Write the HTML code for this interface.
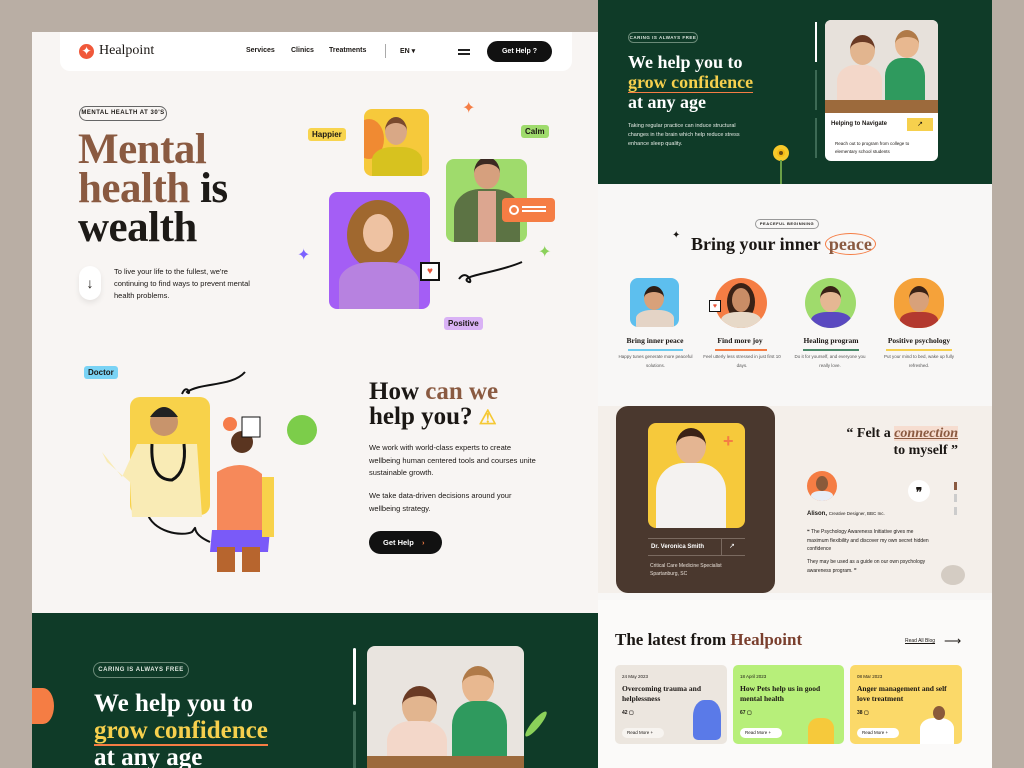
<!DOCTYPE html>
<html><head><meta charset="utf-8"><style>
*{margin:0;padding:0;box-sizing:border-box}
body{width:1024px;height:768px;overflow:hidden;background:#b9aea4;font-family:"Liberation Sans",sans-serif;position:relative;color:#1b1714}
.a{position:absolute}
.serif{font-family:"Liberation Serif",serif}
.b{font-weight:bold}
.pill{position:absolute;border:1px solid #555;border-radius:20px;font-size:6px;font-weight:bold;letter-spacing:.5px;text-align:center}
.tag{position:absolute;font-size:8px;font-weight:bold;padding:2px 4px;border-radius:3px}
.photo{position:absolute;border-radius:8px;overflow:hidden}
.head{position:absolute;border-radius:50%}
.body{position:absolute;border-radius:40% 40% 0 0}
</style></head><body>
<!-- LEFT PANEL -->
<div class="a" style="left:32px;top:32px;width:566px;height:736px;background:#f8f5f3;overflow:hidden">
 <div class="a" style="left:28px;top:0;width:512px;height:39px;background:#fff;border-radius:0 0 10px 10px"></div>
 <div class="a" style="left:47px;top:12px;width:15px;height:15px;border-radius:50%;background:#f0583a;color:#fff;font-size:12px;line-height:14px;text-align:center">✦</div>
 <div class="a serif" style="left:67px;top:11px;font-size:14px">Healpoint</div>
 <div class="a" style="left:214px;top:15px;font-size:7px;font-weight:bold">Services</div>
 <div class="a" style="left:259px;top:15px;font-size:7px;font-weight:bold">Clinics</div>
 <div class="a" style="left:297px;top:15px;font-size:7px;font-weight:bold">Treatments</div>
 <div class="a" style="left:353px;top:12px;width:1px;height:14px;background:#aaa"></div>
 <div class="a" style="left:368px;top:15px;font-size:7px;font-weight:bold">EN ▾</div>
 <div class="a" style="left:426px;top:17px;width:12px;height:1.5px;background:#222;box-shadow:0 4px 0 #222"></div>
 <div class="a" style="left:455px;top:9px;width:65px;height:21px;background:#111;border-radius:11px;color:#fff;font-size:7px;font-weight:bold;text-align:center;line-height:21px">Get Help ?</div>

 <div class="pill" style="left:47px;top:74px;width:88px;height:15px;line-height:13px;border-color:#666">MENTAL HEALTH AT 30'S</div>
 <div class="a serif b" style="left:46px;top:98px;font-size:43px;line-height:39px;color:#8a5a41;letter-spacing:-.5px">Mental<br>health <span style="color:#1d1a17">is</span><br><span style="color:#1d1a17">wealth</span></div>
 <div class="a" style="left:47px;top:234px;width:22px;height:34px;background:#fff;border-radius:11px;box-shadow:0 3px 6px rgba(0,0,0,.08);text-align:center;line-height:34px;font-size:14px">↓</div>
 <div class="a" style="left:82px;top:234px;font-size:7.5px;line-height:12px;width:140px">To live your life to the fullest, we're continuing to find ways to prevent mental health problems.</div>

 <!-- photos -->
 <div class="photo" style="left:332px;top:77px;width:65px;height:67px;background:#f6c93b">
  <div class="a" style="left:-10px;top:10px;width:30px;height:40px;background:#f08a32;border-radius:50%"></div>
  <div class="head" style="left:21px;top:8px;width:22px;height:28px;background:#d9a886;border-top:6px solid #7a4a2e"></div>
  <div class="body" style="left:8px;top:38px;width:50px;height:32px;background:#d7c21f"></div></div>
 <div class="tag" style="left:276px;top:96px;background:#f8d44e">Happier</div>
 <div class="photo" style="left:414px;top:127px;width:81px;height:83px;background:#9fdb6c">
  <div class="head" style="left:28px;top:-2px;width:26px;height:32px;background:#d6a07e;border-top:7px solid #3b2a22"></div>
  <div class="body" style="left:8px;top:30px;width:66px;height:55px;background:#5c7344"></div>
  <div class="a" style="left:32px;top:32px;width:18px;height:52px;background:#dca690"></div></div>
 <div class="tag" style="left:489px;top:93px;background:#9fdb6c">Calm</div>
 <div class="a" style="left:470px;top:166px;width:53px;height:24px;background:#f57d44;border-radius:4px"><div class="a" style="left:7px;top:7px;width:10px;height:10px;border:2px solid #fff;border-radius:50%"></div><div class="a" style="left:20px;top:8px;width:24px;height:2px;background:#fff;box-shadow:0 4px 0 #fff"></div></div>
 <div class="photo" style="left:297px;top:160px;width:101px;height:117px;background:#a45ef5">
  <div class="head" style="left:18px;top:8px;width:62px;height:70px;background:#a0682f"></div>
  <div class="head" style="left:34px;top:22px;width:30px;height:38px;background:#eec2a2"></div>
  <div class="body" style="left:10px;top:70px;width:80px;height:50px;background:#b782e0"></div></div>
 <div class="a" style="left:388px;top:230px;width:20px;height:19px;background:#fff;border:2px solid #111;color:#e8553a;font-size:10px;text-align:center;line-height:15px">♥</div>
 <div class="a" style="left:265px;top:213px;color:#7b61ff;font-size:16px">✦</div>
 <div class="a" style="left:430px;top:66px;color:#f57d44;font-size:16px">✦</div>
 <div class="a" style="left:506px;top:210px;color:#8bd15a;font-size:16px">✦</div>
 <svg class="a" style="left:425px;top:225px" width="70" height="30"><path d="M2 22 C10 10 18 30 10 24 C5 18 40 16 65 5" stroke="#111" stroke-width="2" fill="none"/></svg>
 <div class="tag" style="left:412px;top:285px;background:#d9b2f5">Positive</div>

 <!-- illustration -->
 <div class="tag" style="left:52px;top:334px;background:#7ad3f5">Doctor</div>
 <svg class="a" style="left:60px;top:330px" width="230" height="210">
  <path d="M90 32 C95 20 100 35 95 30 C110 20 140 25 153 10" stroke="#111" stroke-width="2" fill="none"/>
  <path d="M55 150 C60 170 90 175 100 170 C108 160 95 170 118 180" stroke="#111" stroke-width="2" fill="none"/>
  <rect x="38" y="35" width="80" height="118" rx="10" fill="#f8d24a"/>
  <path d="M10 90 L30 115 L45 82 L105 82 L110 155 L40 155 L38 120 L15 100Z" fill="#f9ebb5"/>
  <circle cx="72" cy="60" r="14" fill="#c8946c"/><path d="M58 55 Q72 35 86 55" fill="#222"/>
  <path d="M60 82 Q58 118 80 118 Q95 110 92 82" stroke="#111" stroke-width="3" fill="none"/>
  <circle cx="150" cy="80" r="11" fill="#5a3520"/>
  <path d="M125 110 Q150 95 170 112 L170 170 L125 170Z" fill="#f6895a"/>
  <path d="M120 168 L178 168 L176 190 L118 190Z" fill="#7a5af8"/>
  <rect x="125" y="185" width="18" height="45" fill="#b7652e"/><rect x="150" y="185" width="18" height="45" fill="#b7652e"/>
  <rect x="170" y="115" width="12" height="60" fill="#f8d24a"/>
  <circle cx="210" cy="68" r="15" fill="#7ccd4a"/>
  <circle cx="138" cy="62" r="7" fill="#f67c49"/>
  <rect x="150" y="55" width="18" height="20" fill="#fff" stroke="#111"/>
 </svg>
 <div class="a serif b" style="left:337px;top:347px;font-size:25px;line-height:25px">How <span style="color:#8a5a41">can we</span><br>help you? <span style="color:#f5c833;font-size:20px">⚠</span></div>
 <div class="a" style="left:337px;top:410px;width:170px;font-size:7.5px;line-height:12.7px">We work with world-class experts to create wellbeing human centered tools and courses unite sustainable growth.</div>
 <div class="a" style="left:337px;top:458px;width:170px;font-size:7.5px;line-height:12.7px">We take data-driven decisions around your wellbeing strategy.</div>
 <div class="a" style="left:337px;top:499px;width:73px;height:23px;background:#111;border-radius:12px;color:#fff;font-size:7.5px;font-weight:bold;line-height:23px;padding-left:14px">Get Help <span style="color:#f57d44;margin-left:6px">›</span></div>

 <!-- green bottom -->
 <div class="a" style="left:0;top:581px;width:566px;height:160px;background:#0f3b28">
  <div class="a" style="left:0;top:75px;width:22px;height:36px;background:#f57d44;border-radius:0 50% 50% 0"></div>
  <div class="pill" style="left:61px;top:49px;width:96px;height:16px;line-height:14px;border-color:#6b8a78;color:#dfe7df">CARING IS ALWAYS FREE</div>
  <div class="a serif b" style="left:62px;top:77px;font-size:25px;line-height:27px;color:#fff">We help you to<br><span style="color:#f6d04d;border-bottom:2px solid #f57d44">grow confidence</span><br>at any age</div>
  <div class="a" style="left:321px;top:35px;width:3px;height:57px;background:#fff;border-radius:2px"></div>
  <div class="a" style="left:321px;top:98px;width:3px;height:60px;background:#3d6a55;border-radius:2px"></div>
  <div class="photo" style="left:335px;top:33px;width:157px;height:130px;background:#e9e4df">
   <div class="head" style="left:35px;top:40px;width:35px;height:40px;background:#e2b58f;border-top:10px solid #6a3a24"></div>
   <div class="body" style="left:20px;top:75px;width:60px;height:50px;background:#f3d7c9"></div>
   <div class="head" style="left:95px;top:20px;width:32px;height:38px;background:#e8b890;border-top:9px solid #b07a48"></div>
   <div class="body" style="left:85px;top:55px;width:55px;height:60px;background:#2f9a5e"></div>
   <div class="a" style="left:0;top:110px;width:157px;height:20px;background:#9c6a3c"></div></div>
  <div class="a" style="left:500px;top:95px;width:8px;height:32px;background:#8bd15a;border-radius:50%;transform:rotate(40deg)"></div>
 </div>
</div>

<!-- RIGHT PANEL -->
<div class="a" style="left:598px;top:0;width:394px;height:768px;background:#f8f7f6;overflow:hidden">
 <div class="a" style="left:0;top:0;width:394px;height:184px;background:#0f3b28">
  <div class="pill" style="left:30px;top:32px;width:70px;height:11px;line-height:9px;font-size:4.5px;border-color:#6b8a78;color:#dfe7df">CARING IS ALWAYS FREE</div>
  <div class="a serif b" style="left:30px;top:52px;font-size:18px;line-height:20px;color:#fff">We help you to<br><span style="color:#f6d04d;border-bottom:1.5px solid #f57d44">grow confidence</span><br>at any age</div>
  <div class="a" style="left:30px;top:122px;width:125px;font-size:5.5px;line-height:9px;color:#e6ece6">Taking regular practice can induce structural changes in the brain which help reduce stress enhance sleep quality.</div>
  <div class="a" style="left:175px;top:145px;width:16px;height:16px;border-radius:50%;background:#f5b914;border:4px solid #f7c92a"><div class="a" style="left:2px;top:2px;width:4px;height:4px;background:#6b4a12;border-radius:50%"></div></div>
  <div class="a" style="left:182px;top:160px;width:2px;height:24px;background:#6aa047"></div>
  <div class="a" style="left:217px;top:22px;width:2px;height:40px;background:#fff"></div>
  <div class="a" style="left:217px;top:70px;width:2px;height:40px;background:#3d6a55"></div>
  <div class="a" style="left:217px;top:118px;width:2px;height:40px;background:#3d6a55"></div>
  <div class="photo" style="left:227px;top:20px;width:113px;height:141px;background:#fff;border-radius:6px">
   <div class="a" style="left:0;top:0;width:113px;height:93px;background:#e7e1db"></div>
   <div class="head" style="left:25px;top:15px;width:25px;height:30px;background:#e2b58f;border-top:7px solid #6a3a24"></div>
   <div class="body" style="left:12px;top:45px;width:45px;height:40px;background:#f3d7c9"></div>
   <div class="head" style="left:70px;top:10px;width:24px;height:28px;background:#e8b890;border-top:7px solid #b07a48"></div>
   <div class="body" style="left:60px;top:38px;width:40px;height:45px;background:#2f9a5e"></div>
   <div class="a" style="left:0;top:80px;width:113px;height:13px;background:#9c6a3c"></div>
   <div class="a" style="left:6px;top:101px;font-size:6px;font-weight:bold">Helping to Navigate</div>
   <div class="a" style="left:82px;top:98px;width:26px;height:13px;background:#f6d04d;font-size:7px;text-align:center;line-height:13px">↗</div>
   <div class="a" style="left:10px;top:120px;width:95px;font-size:4.5px;line-height:8px">Reach out to program from college to elementary school students</div></div>
 </div>
 <div class="pill" style="left:157px;top:219px;width:64px;height:10px;line-height:8px;font-size:4px;border-color:#999">PEACEFUL BEGINNING</div>
 <div class="a" style="left:74px;top:230px;font-size:10px">✦</div>
 <div class="a serif" style="left:93px;top:234px;font-size:18px;font-weight:bold">Bring your inner <span style="color:#8a5a41;border:1.5px solid #f57d44;border-radius:50%;padding:0 3px">peace</span></div>
 <div class="photo" style="left:32px;top:278px;width:49px;height:49px;background:#5dbfee">
  <div class="head" style="left:14px;top:8px;width:20px;height:24px;background:#d8a17a;border-top:6px solid #2e1e15"></div>
  <div class="body" style="left:6px;top:32px;width:38px;height:20px;background:#e4d4c6"></div></div>
 <div class="a" style="left:117px;top:278px;width:52px;height:50px;border-radius:50%;background:#f57d44;overflow:hidden"><div class="head" style="left:12px;top:5px;width:28px;height:38px;background:#3a2216"></div><div class="head" style="left:17px;top:10px;width:18px;height:24px;background:#c98d66"></div><div class="body" style="left:6px;top:34px;width:40px;height:20px;background:#e7d9c8"></div></div>
 <div class="a" style="left:111px;top:300px;width:12px;height:12px;background:#fff;border:1px solid #111;font-size:7px;color:#e8553a;text-align:center;line-height:11px">♥</div>
 <div class="a" style="left:207px;top:278px;width:51px;height:50px;border-radius:50%;background:#9fdb6c;overflow:hidden"><div class="head" style="left:15px;top:8px;width:21px;height:26px;background:#e5b793;border-top:6px solid #3a2216"></div><div class="body" style="left:6px;top:34px;width:40px;height:20px;background:#5a49c0"></div></div>
 <div class="a" style="left:296px;top:278px;width:50px;height:50px;border-radius:45%;background:#f5a23a;overflow:hidden"><div class="head" style="left:15px;top:8px;width:20px;height:26px;background:#d8a17a;border-top:6px solid #3a2216"></div><div class="body" style="left:6px;top:34px;width:38px;height:20px;background:#b3392f"></div></div>
 <div class="a serif b" style="left:20px;top:336px;font-size:7.5px;width:74px;text-align:center">Bring inner peace</div>
 <div class="a" style="left:30px;top:349px;width:55px;height:1.5px;background:#6ccbef"></div>
 <div class="a serif b" style="left:107px;top:336px;font-size:7.5px;width:70px;text-align:center">Find more joy</div>
 <div class="a" style="left:117px;top:349px;width:52px;height:1.5px;background:#f57d44"></div>
 <div class="a serif b" style="left:196px;top:336px;font-size:7.5px;width:74px;text-align:center">Healing program</div>
 <div class="a" style="left:205px;top:349px;width:56px;height:1.5px;background:#4a8a6a"></div>
 <div class="a serif b" style="left:276px;top:336px;font-size:7.5px;width:90px;text-align:center">Positive psychology</div>
 <div class="a" style="left:288px;top:349px;width:66px;height:1.5px;background:#f6d04d"></div>
 <div class="a" style="left:20px;top:353px;width:75px;font-size:4.5px;line-height:8.5px;text-align:center;color:#555">Happy tunes generate more peaceful solutions.</div>
 <div class="a" style="left:105px;top:353px;width:78px;font-size:4.5px;line-height:8.5px;text-align:center;color:#555">Feel utterly less stressed in just first 10 days.</div>
 <div class="a" style="left:193px;top:353px;width:78px;font-size:4.5px;line-height:8.5px;text-align:center;color:#555">Do it for yourself, and everyone you really love.</div>
 <div class="a" style="left:282px;top:353px;width:78px;font-size:4.5px;line-height:8.5px;text-align:center;color:#555">Put your mind to bed, wake up fully refreshed.</div>

 <!-- testimonial -->
 <div class="a" style="left:0;top:406px;width:394px;height:187px;background:#f4efea"></div>
 <div class="a" style="left:18px;top:406px;width:159px;height:187px;background:#4a382e;border-radius:12px">
  <div class="photo" style="left:32px;top:17px;width:97px;height:105px;background:#f6c93b">
   <div class="head" style="left:28px;top:5px;width:30px;height:36px;background:#e4b592;border-top:8px solid #3a2216"></div>
   <div class="body" style="left:8px;top:40px;width:70px;height:70px;background:#f4f2f0"></div>
   <div class="a" style="left:75px;top:8px;color:#f57d44;font-size:18px;font-weight:bold">+</div></div>
  <div class="a" style="left:32px;top:132px;width:97px;height:18px;border-top:1px solid #7a6a60;border-bottom:1px solid #7a6a60"></div>
  <div class="a" style="left:35px;top:138px;font-size:6px;font-weight:bold;color:#fff">Dr. Veronica Smith</div>
  <div class="a" style="left:105px;top:132px;width:1px;height:18px;background:#7a6a60"></div>
  <div class="a" style="left:113px;top:136px;font-size:7px;color:#fff">↗</div>
  <div class="a" style="left:34px;top:156px;font-size:5px;line-height:8px;color:#e8e0d8">Critical Care Medicine Specialist<br>Spartanburg, SC</div>
 </div>
 <div class="a serif" style="left:210px;top:425px;font-size:14px;line-height:17px;text-align:right;width:150px;font-weight:bold">“ Felt a <i style="color:#8a5a41;text-decoration:underline;background:#f6ddd0">connection</i><br>to myself ”</div>
 <div class="a" style="left:209px;top:471px;width:30px;height:30px;border-radius:50%;background:#f57d44;overflow:hidden"><div class="head" style="left:9px;top:5px;width:12px;height:15px;background:#8a5a3a"></div><div class="body" style="left:4px;top:20px;width:22px;height:12px;background:#e8eef6"></div></div>
 <div class="a" style="left:310px;top:480px;width:22px;height:22px;border-radius:50%;background:#fff;font-weight:bold;font-size:12px;text-align:center;line-height:24px">❞</div>
 <div class="a" style="left:356px;top:482px;width:3px;height:8px;background:#8a5a41"></div>
 <div class="a" style="left:356px;top:494px;width:3px;height:8px;background:#ccc"></div>
 <div class="a" style="left:356px;top:507px;width:3px;height:8px;background:#ccc"></div>
 <div class="a" style="left:209px;top:511px;font-size:6px"><b>Alison,</b> <span style="font-size:4.5px">Creative Designer, BBC Inc.</span></div>
 <div class="a" style="left:209px;top:528px;width:122px;font-size:5px;line-height:8.5px">❝ The Psychology Awareness Initiative gives me maximum flexibility and discover my own secret hidden confidence</div>
 <div class="a" style="left:209px;top:558px;width:122px;font-size:5px;line-height:8.5px">They may be used as a guide on our own psychology awareness program. ❞</div>
 <div class="a" style="left:343px;top:565px;width:24px;height:20px;background:#d4ccc3;border-radius:50%"></div>

 <!-- blog -->
 <div class="a" style="left:0;top:600px;width:394px;height:168px;background:#fbfaf9"></div>
 <div class="a serif" style="left:17px;top:630px;font-size:17px;font-weight:bold">The latest from <span style="color:#7a3f2e">Healpoint</span></div>
 <div class="a" style="left:307px;top:638px;font-size:5px;text-decoration:underline">Read All Blog</div>
 <div class="a" style="left:346px;top:634px;font-size:12px">⟶</div>
 <div class="a" style="left:17px;top:665px;width:112px;height:79px;background:#ece6df;border-radius:5px"></div>
 <div class="a" style="left:135px;top:665px;width:111px;height:79px;background:#b7ef7a;border-radius:5px"></div>
 <div class="a" style="left:252px;top:665px;width:112px;height:79px;background:#fbd969;border-radius:5px"></div>
 <div class="a" style="left:24px;top:674px;font-size:4.5px">24 May 2023</div>
 <div class="a serif" style="left:24px;top:684px;font-size:7.5px;line-height:10px;width:95px;font-weight:bold">Overcoming trauma and helplessness</div>
 <div class="a" style="left:24px;top:710px;font-size:5px;font-weight:bold">42 ▢</div>
 <div class="a" style="left:24px;top:728px;width:42px;height:10px;border-radius:5px;background:#f7f4f0;font-size:4.5px;line-height:10px;padding-left:5px">Read More +</div>
 <div class="a" style="left:95px;top:700px;width:28px;height:40px;background:#5a7ae8;border-radius:40% 40% 5px 5px"></div>
 <div class="a" style="left:142px;top:674px;font-size:4.5px">18 April 2023</div>
 <div class="a serif" style="left:142px;top:684px;font-size:7.5px;line-height:10px;width:100px;font-weight:bold">How Pets help us in good mental health</div>
 <div class="a" style="left:142px;top:710px;font-size:5px;font-weight:bold">67 ▢</div>
 <div class="a" style="left:142px;top:728px;width:42px;height:10px;border-radius:5px;background:#fff;font-size:4.5px;line-height:10px;padding-left:5px">Read More +</div>
 <div class="a" style="left:210px;top:718px;width:26px;height:26px;background:#f6c93b;border-radius:40% 40% 0 0"></div>
 <div class="a" style="left:259px;top:674px;font-size:4.5px">08 Mar 2023</div>
 <div class="a serif" style="left:259px;top:684px;font-size:7.5px;line-height:10px;width:100px;font-weight:bold">Anger management and self love treatment</div>
 <div class="a" style="left:259px;top:710px;font-size:5px;font-weight:bold">38 ▢</div>
 <div class="a" style="left:259px;top:728px;width:42px;height:10px;border-radius:5px;background:#fff;font-size:4.5px;line-height:10px;padding-left:5px">Read More +</div>
 <div class="a" style="left:322px;top:718px;width:34px;height:26px;background:#fff;border-radius:40% 40% 0 0"></div>
 <div class="a" style="left:335px;top:706px;width:12px;height:14px;background:#8a5a3a;border-radius:50%"></div>
</div>
</body></html>
